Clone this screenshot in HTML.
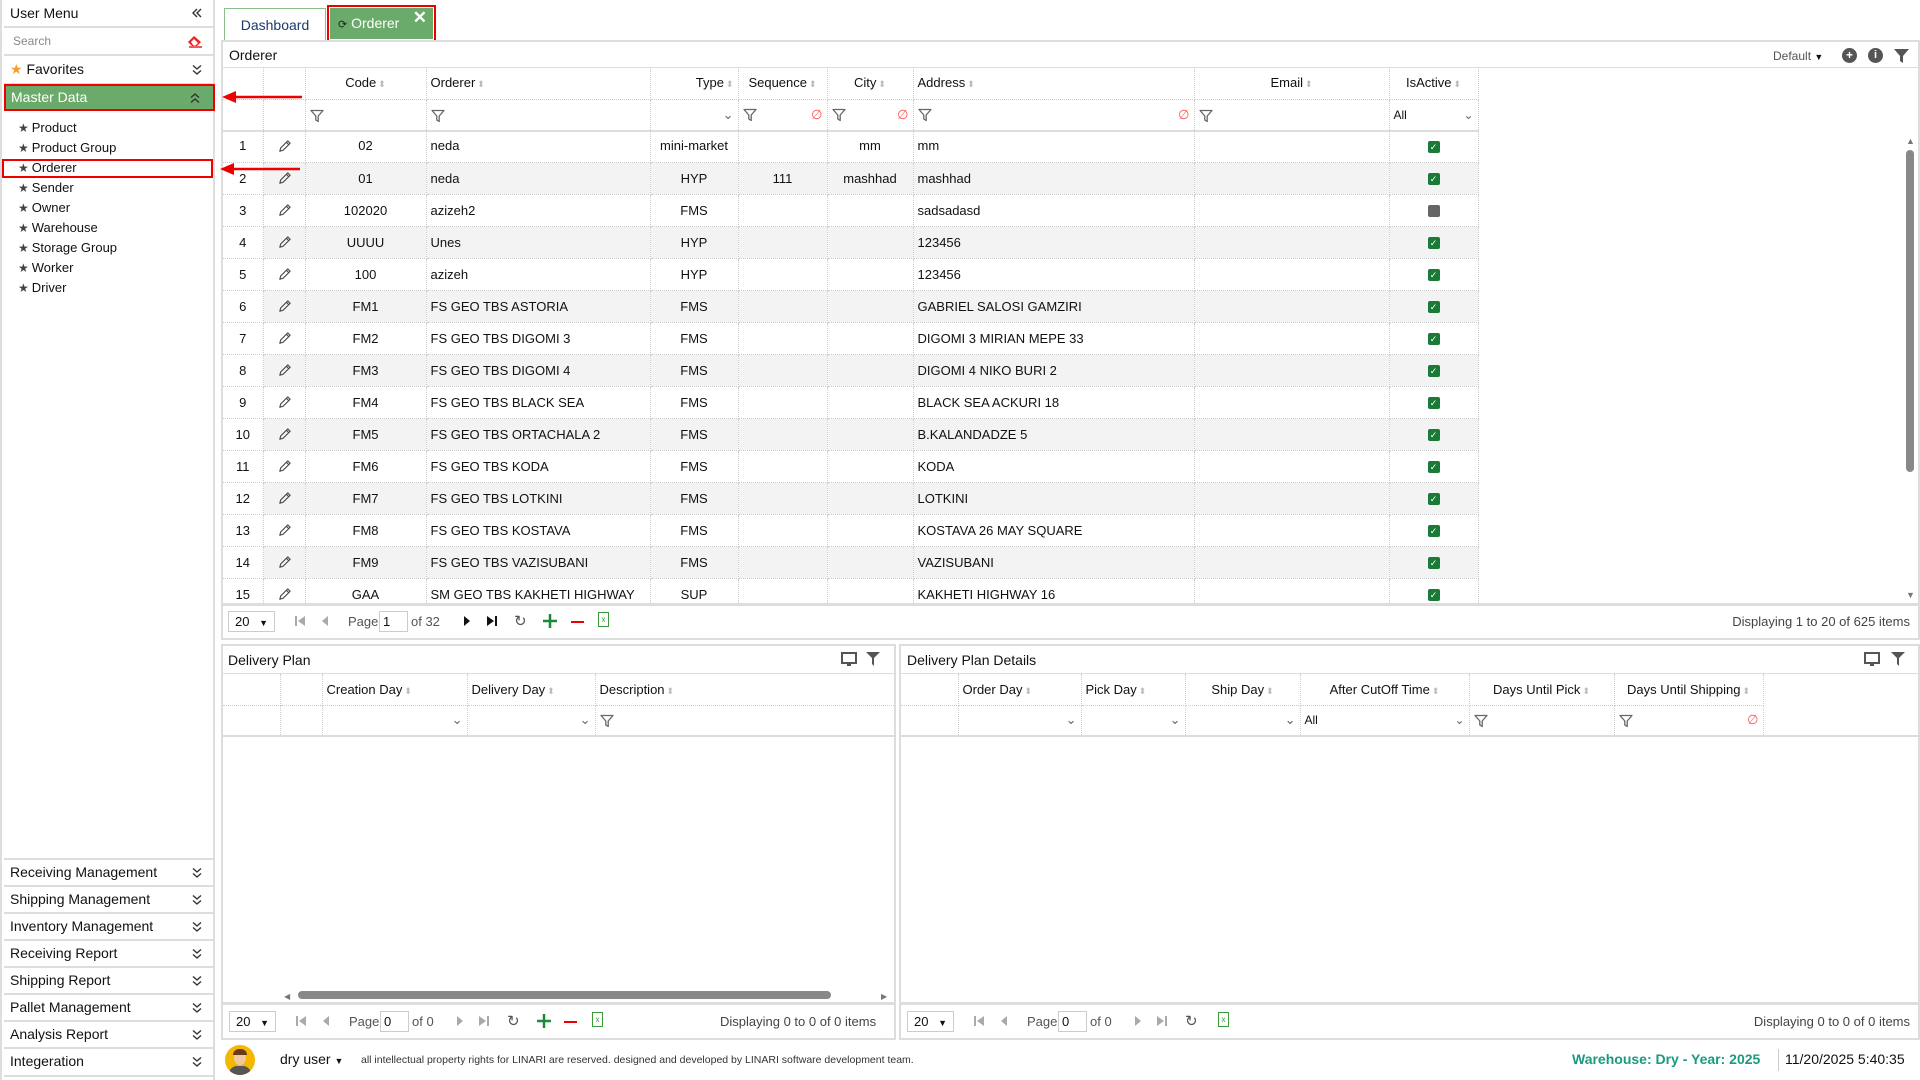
<!DOCTYPE html>
<html><head><meta charset="utf-8">
<style>
*{box-sizing:border-box;margin:0;padding:0}
body{width:1920px;height:1080px;overflow:hidden;background:#fff;font-family:"Liberation Sans",Arial,sans-serif;font-size:13px;color:#111;position:relative}
.a{position:absolute}
.side{left:0;top:0;width:215px;height:1080px;border-right:2px solid #ddd;border-left:2px solid #ddd}
.srow{position:absolute;left:2px;width:211px;border-bottom:2px solid #ddd;font-size:14px;padding-left:6px}
.chev{position:absolute;right:12px;top:50%;transform:translateY(-50%);width:12px;height:12px}
.item{position:absolute;left:16px;font-size:13px}
.item .st{color:#444;font-size:12px;margin-right:3px}
.panel{border:2px solid #ddd;background:#fff}
table{border-collapse:collapse;table-layout:fixed}
td,th{border-right:1px dotted #ccc;border-bottom:1px dotted #ccc;font-weight:normal;white-space:nowrap;overflow:hidden;padding:0 4px}
.grid td{height:32px}
.ev td{background:#f3f3f3}
.ev td.rn{background:#fff}
.c{text-align:center}
.hs{color:#bbb;font-size:9px;margin-left:2px}
.cb{display:inline-block;width:12px;height:12px;background:#1a7a36;border-radius:2px;color:#fff;font-size:9px;line-height:12px;text-align:center;vertical-align:middle}
.nul{color:#f55;float:right}
.pg{position:absolute;color:#555;font-size:13px}
.sel{border:1px solid #ccc;background:#fff}
.fi{display:inline-block;width:14px;height:14px;vertical-align:middle}
.pe{display:inline-block;width:15px;height:15px;vertical-align:middle}
.nc td:last-child{border-right:none}
</style></head><body>
<svg width="0" height="0" style="position:absolute">
<defs>
<symbol id="dd" viewBox="0 0 12 12"><path d="M2 1.5L6 5 10 1.5M2 6.5L6 10 10 6.5" fill="none" stroke="#333" stroke-width="1.4"/></symbol>
<symbol id="du" viewBox="0 0 12 12"><path d="M2 5.5L6 2 10 5.5M2 10.5L6 7 10 10.5" fill="none" stroke="#333" stroke-width="1.4"/></symbol>
<symbol id="flt" viewBox="0 0 14 14"><path d="M1 1.5H13L8.2 7V12.5L5.8 11V7Z" fill="none" stroke="#666" stroke-width="1.3" stroke-linejoin="round"/></symbol>
<symbol id="pen" viewBox="0 0 16 16"><path d="M3 13L4 9.5 11.5 2 14 4.5 6.5 12Z M10 3.5L12.5 6 M3 13L6.5 12" fill="none" stroke="#444" stroke-width="1.2" stroke-linejoin="round"/></symbol>
</defs></svg>

<!-- sidebar -->
<div class="a side">
 <div class="srow" style="top:0;height:28px;line-height:26px">User Menu<svg class="chev" viewBox="0 0 12 12"><path d="M6 2L2 6 6 10M10 2L6 6 10 10" fill="none" stroke="#333" stroke-width="1.4"/></svg></div>
 <div class="srow" style="top:28px;height:28px;line-height:26px;color:#888;font-size:12px;padding-left:9px">Search<svg class="chev" style="width:16px;height:14px" viewBox="0 0 16 14"><path d="M1 8L7 2 14 8 10 12H5Z" fill="#e22"/><path d="M4 8.5L7 11.5M2 13H15" stroke="#e22" stroke-width="1.4" fill="none"/><path d="M4 8L7 5 11 9 8.5 11.5H6.5Z" fill="#fff"/></svg></div>
 <div class="srow" style="top:56px;height:29px;line-height:27px"><span style="color:#f0a030">★</span> Favorites<svg class="chev"><use href="#dd"/></svg></div>
 <div class="a" style="left:2px;top:84px;width:211px;height:27px;background:#6aaa6a;border:2px solid #e00;color:#fff;font-size:14px;line-height:23px;padding-left:5px">Master Data<svg class="chev"><use href="#du"/></svg></div>
 <div class="item" style="top:120px"><span class="st">★</span>Product</div>
 <div class="item" style="top:140px"><span class="st">★</span>Product Group</div>
 <div class="item" style="top:160px"><span class="st">★</span>Orderer</div>
 <div class="a" style="left:0px;top:159px;width:211px;height:19px;border:2px solid #e00"></div>
 <div class="item" style="top:180px"><span class="st">★</span>Sender</div>
 <div class="item" style="top:200px"><span class="st">★</span>Owner</div>
 <div class="item" style="top:220px"><span class="st">★</span>Warehouse</div>
 <div class="item" style="top:240px"><span class="st">★</span>Storage Group</div>
 <div class="item" style="top:260px"><span class="st">★</span>Worker</div>
 <div class="item" style="top:280px"><span class="st">★</span>Driver</div>
 <div class="srow" style="top:858px;height:2px;padding:0"></div>
 <div class="srow" style="top:860px;height:27px;line-height:25px">Receiving Management<svg class="chev"><use href="#dd"/></svg></div>
 <div class="srow" style="top:887px;height:27px;line-height:25px">Shipping Management<svg class="chev"><use href="#dd"/></svg></div>
 <div class="srow" style="top:914px;height:27px;line-height:25px">Inventory Management<svg class="chev"><use href="#dd"/></svg></div>
 <div class="srow" style="top:941px;height:27px;line-height:25px">Receiving Report<svg class="chev"><use href="#dd"/></svg></div>
 <div class="srow" style="top:968px;height:27px;line-height:25px">Shipping Report<svg class="chev"><use href="#dd"/></svg></div>
 <div class="srow" style="top:995px;height:27px;line-height:25px">Pallet Management<svg class="chev"><use href="#dd"/></svg></div>
 <div class="srow" style="top:1022px;height:27px;line-height:25px">Analysis Report<svg class="chev"><use href="#dd"/></svg></div>
 <div class="srow" style="top:1049px;height:28px;line-height:25px">Integeration<svg class="chev"><use href="#dd"/></svg></div>
</div>

<!-- tabs -->
<div class="a" style="left:224px;top:8px;width:102px;height:34px;border:1px solid #8bbf8b;border-bottom:none;color:#1a3a6a;font-size:14px;text-align:center;line-height:32px">Dashboard</div>
<div class="a" style="left:327px;top:5px;width:109px;height:37px;border:2px solid #e00;padding:1px"><div style="background:#6aaa6a;height:31px;color:#fff;font-size:14px;line-height:31px;padding-left:8px"><span style="font-size:11px;color:#222">⟳</span> Orderer<span style="position:absolute;right:7px;top:0px;font-size:17px;font-weight:bold;line-height:22px">✕</span></div></div>

<!-- main panel -->
<div class="a panel" style="left:221px;top:40px;width:1699px;height:600px">
 <div class="a" style="left:6px;top:5px;font-size:14px">Orderer</div>
 <div class="a" style="left:1550px;top:7px;font-size:12px;color:#555">Default <span style="color:#111;font-size:9px">▼</span></div>
 <div class="a" style="left:1619px;top:6px;width:15px;height:15px;border-radius:50%;background:#555;color:#fff;font-size:12px;font-weight:bold;text-align:center;line-height:15px">+</div>
 <div class="a" style="left:1645px;top:6px;width:15px;height:15px;border-radius:50%;background:#555;color:#fff;font-size:11px;font-weight:bold;text-align:center;line-height:15px">i</div>
 <svg class="a" style="left:1671px;top:7px" width="15" height="14"><path d="M0 0H15L9 7V14L6 12V7Z" fill="#555"/></svg>
 <div class="a" style="left:0;top:25px;width:1695px;border-top:1px solid #ddd"></div>
</div>
<div class="a" style="left:223px;top:67px">
<table class="grid" style="width:1255px">
<colgroup><col style="width:40px"><col style="width:42px"><col style="width:121px"><col style="width:224px"><col style="width:88px"><col style="width:89px"><col style="width:86px"><col style="width:281px"><col style="width:195px"><col style="width:89px"></colgroup>
<tr style="height:32px"><th></th><th></th><th class="c">Code<span class="hs">⬍</span></th><th style="text-align:left">Orderer<span class="hs">⬍</span></th><th style="text-align:right">Type<span class="hs">⬍</span></th><th class="c">Sequence<span class="hs">⬍</span></th><th class="c">City<span class="hs">⬍</span></th><th style="text-align:left">Address<span class="hs">⬍</span></th><th class="c">Email<span class="hs">⬍</span></th><th class="c">IsActive<span class="hs">⬍</span></th></tr>
<tr style="height:31px"><td style="border-bottom:2px solid #ddd"></td><td style="border-bottom:2px solid #ddd"></td><td style="border-bottom:2px solid #ddd"><svg class="fi"><use href="#flt"/></svg></td><td style="border-bottom:2px solid #ddd"><svg class="fi"><use href="#flt"/></svg></td><td style="border-bottom:2px solid #ddd;text-align:right;color:#666">⌄</td><td style="border-bottom:2px solid #ddd"><svg class="fi"><use href="#flt"/></svg><span class="nul">∅</span></td><td style="border-bottom:2px solid #ddd"><svg class="fi"><use href="#flt"/></svg><span class="nul">∅</span></td><td style="border-bottom:2px solid #ddd"><svg class="fi"><use href="#flt"/></svg><span class="nul">∅</span></td><td style="border-bottom:2px solid #ddd"><svg class="fi"><use href="#flt"/></svg></td><td style="border-bottom:2px solid #ddd;font-size:12px">All<span style="float:right;color:#666">⌄</span></td></tr>
</table>
</div>
<div class="a" style="left:223px;top:130px;width:1680px;height:474px;overflow:hidden">
<table class="grid" style="width:1255px">
<colgroup><col style="width:40px"><col style="width:42px"><col style="width:121px"><col style="width:224px"><col style="width:88px"><col style="width:89px"><col style="width:86px"><col style="width:281px"><col style="width:195px"><col style="width:89px"></colgroup>
<tr><td class="c rn">1</td><td class="c"><svg class="pe"><use href="#pen"/></svg></td><td class="c">02</td><td>neda</td><td class="c">mini-market</td><td></td><td class="c">mm</td><td>mm</td><td></td><td class="c"><span class="cb">✓</span></td></tr>
<tr class="ev"><td class="c rn">2</td><td class="c"><svg class="pe"><use href="#pen"/></svg></td><td class="c">01</td><td>neda</td><td class="c">HYP</td><td class="c">111</td><td class="c">mashhad</td><td>mashhad</td><td></td><td class="c"><span class="cb">✓</span></td></tr>
<tr><td class="c rn">3</td><td class="c"><svg class="pe"><use href="#pen"/></svg></td><td class="c">102020</td><td>azizeh2</td><td class="c">FMS</td><td></td><td></td><td>sadsadasd</td><td></td><td class="c"><span class="cb" style="background:#666"></span></td></tr>
<tr class="ev"><td class="c rn">4</td><td class="c"><svg class="pe"><use href="#pen"/></svg></td><td class="c">UUUU</td><td>Unes</td><td class="c">HYP</td><td></td><td></td><td>123456</td><td></td><td class="c"><span class="cb">✓</span></td></tr>
<tr><td class="c rn">5</td><td class="c"><svg class="pe"><use href="#pen"/></svg></td><td class="c">100</td><td>azizeh</td><td class="c">HYP</td><td></td><td></td><td>123456</td><td></td><td class="c"><span class="cb">✓</span></td></tr>
<tr class="ev"><td class="c rn">6</td><td class="c"><svg class="pe"><use href="#pen"/></svg></td><td class="c">FM1</td><td>FS GEO TBS ASTORIA</td><td class="c">FMS</td><td></td><td></td><td>GABRIEL SALOSI GAMZIRI</td><td></td><td class="c"><span class="cb">✓</span></td></tr>
<tr><td class="c rn">7</td><td class="c"><svg class="pe"><use href="#pen"/></svg></td><td class="c">FM2</td><td>FS GEO TBS DIGOMI 3</td><td class="c">FMS</td><td></td><td></td><td>DIGOMI 3 MIRIAN MEPE 33</td><td></td><td class="c"><span class="cb">✓</span></td></tr>
<tr class="ev"><td class="c rn">8</td><td class="c"><svg class="pe"><use href="#pen"/></svg></td><td class="c">FM3</td><td>FS GEO TBS DIGOMI 4</td><td class="c">FMS</td><td></td><td></td><td>DIGOMI 4 NIKO BURI 2</td><td></td><td class="c"><span class="cb">✓</span></td></tr>
<tr><td class="c rn">9</td><td class="c"><svg class="pe"><use href="#pen"/></svg></td><td class="c">FM4</td><td>FS GEO TBS BLACK SEA</td><td class="c">FMS</td><td></td><td></td><td>BLACK SEA ACKURI 18</td><td></td><td class="c"><span class="cb">✓</span></td></tr>
<tr class="ev"><td class="c rn">10</td><td class="c"><svg class="pe"><use href="#pen"/></svg></td><td class="c">FM5</td><td>FS GEO TBS ORTACHALA 2</td><td class="c">FMS</td><td></td><td></td><td>B.KALANDADZE 5</td><td></td><td class="c"><span class="cb">✓</span></td></tr>
<tr><td class="c rn">11</td><td class="c"><svg class="pe"><use href="#pen"/></svg></td><td class="c">FM6</td><td>FS GEO TBS KODA</td><td class="c">FMS</td><td></td><td></td><td>KODA</td><td></td><td class="c"><span class="cb">✓</span></td></tr>
<tr class="ev"><td class="c rn">12</td><td class="c"><svg class="pe"><use href="#pen"/></svg></td><td class="c">FM7</td><td>FS GEO TBS LOTKINI</td><td class="c">FMS</td><td></td><td></td><td>LOTKINI</td><td></td><td class="c"><span class="cb">✓</span></td></tr>
<tr><td class="c rn">13</td><td class="c"><svg class="pe"><use href="#pen"/></svg></td><td class="c">FM8</td><td>FS GEO TBS KOSTAVA</td><td class="c">FMS</td><td></td><td></td><td>KOSTAVA 26 MAY SQUARE</td><td></td><td class="c"><span class="cb">✓</span></td></tr>
<tr class="ev"><td class="c rn">14</td><td class="c"><svg class="pe"><use href="#pen"/></svg></td><td class="c">FM9</td><td>FS GEO TBS VAZISUBANI</td><td class="c">FMS</td><td></td><td></td><td>VAZISUBANI</td><td></td><td class="c"><span class="cb">✓</span></td></tr>
<tr><td class="c rn">15</td><td class="c"><svg class="pe"><use href="#pen"/></svg></td><td class="c">GAA</td><td>SM GEO TBS KAKHETI HIGHWAY</td><td class="c">SUP</td><td></td><td></td><td>KAKHETI HIGHWAY 16</td><td></td><td class="c"><span class="cb">✓</span></td></tr>
</table>
</div>
<!-- vscroll -->
<div class="a" style="left:1906px;top:136px;font-size:9px;color:#777">▲</div>
<div class="a" style="left:1906px;top:150px;width:8px;height:322px;background:#888;border-radius:4px"></div>
<div class="a" style="left:1906px;top:590px;font-size:9px;color:#777">▼</div>
<!-- pager -->
<div class="a" style="left:221px;top:603px;width:1699px;border-top:3px solid #ddd"></div>
<div class="a sel" style="left:228px;top:611px;width:47px;height:21px;font-size:13px;line-height:19px;padding-left:6px">20 <span style="font-size:9px;margin-left:6px">▼</span></div>
<svg class="a" style="left:294px;top:615px" width="12" height="12"><path d="M2 1V11" stroke="#aaa" stroke-width="2"/><path d="M11 1V11L4 6Z" fill="#aaa"/></svg>
<svg class="a" style="left:320px;top:615px" width="10" height="12"><path d="M8 1V11L2 6Z" fill="#aaa"/></svg>
<div class="pg" style="left:348px;top:614px">Page</div>
<div class="a sel" style="left:379px;top:611px;width:29px;height:21px;font-size:13px;line-height:19px;padding-left:3px">1</div>
<div class="pg" style="left:411px;top:614px">of 32</div>
<svg class="a" style="left:462px;top:615px" width="10" height="12"><path d="M2 1V11L8 6Z" fill="#111"/></svg>
<svg class="a" style="left:486px;top:615px" width="12" height="12"><path d="M1 1V11L8 6Z" fill="#111"/><path d="M10 1V11" stroke="#111" stroke-width="2"/></svg>
<div class="pg" style="left:514px;top:612px;font-size:15px">↻</div>
<svg class="a" style="left:543px;top:614px" width="14" height="14"><path d="M7 0V14M0 7H14" stroke="#1a8a3a" stroke-width="2.5"/></svg>
<div class="a" style="left:571px;top:621px;width:13px;height:2px;background:#e00"></div>
<div class="pg" style="left:598px;top:612px;color:#3a9a3a;border:1px solid #3a9a3a;width:11px;height:15px;font-size:8px;text-align:center;line-height:14px">x</div>
<div class="pg" style="right:10px;top:614px;color:#444">Displaying 1 to 20 of 625 items</div>

<!-- red arrows -->
<svg class="a" style="left:220px;top:88px" width="85" height="90"><path d="M82 9H14" stroke="#e00" stroke-width="2.5"/><path d="M2 9L16 3V15Z" fill="#e00"/><path d="M80 81H12" stroke="#e00" stroke-width="2.5"/><path d="M0 81L14 75V87Z" fill="#e00"/></svg>

<!-- Delivery Plan -->
<div class="a panel" style="left:221px;top:644px;width:675px;height:396px"></div>
<div class="a" style="left:228px;top:652px;font-size:14px">Delivery Plan</div>
<svg class="a" style="left:841px;top:652px" width="16" height="15"><rect x="1" y="1" width="14" height="10" fill="none" stroke="#555" stroke-width="2"/><rect x="6" y="11" width="4" height="3" fill="#555"/></svg>
<svg class="a" style="left:866px;top:652px" width="14" height="14"><path d="M0 0H14L8 6V14L6 12V6Z" fill="#555"/></svg>
<div class="a" style="left:223px;top:673px;width:671px;border-top:1px solid #ddd"></div>
<div class="a" style="left:223px;top:674px">
<table style="width:671px" class="nc"><colgroup><col style="width:57px"><col style="width:42px"><col style="width:145px"><col style="width:128px"><col style="width:299px"></colgroup>
<tr style="height:31px"><td></td><td></td><td>Creation Day<span class="hs">⬍</span></td><td>Delivery Day<span class="hs">⬍</span></td><td>Description<span class="hs">⬍</span></td></tr>
<tr style="height:31px"><td style="border-bottom:2px solid #ddd"></td><td style="border-bottom:2px solid #ddd"></td><td style="border-bottom:2px solid #ddd;text-align:right;color:#666">⌄</td><td style="border-bottom:2px solid #ddd;text-align:right;color:#666">⌄</td><td style="border-bottom:2px solid #ddd"><svg class="fi"><use href="#flt"/></svg></td></tr></table></div>
<div class="a" style="left:284px;top:992px;font-size:8px;color:#777">◀</div>
<div class="a" style="left:298px;top:991px;width:533px;height:8px;background:#888;border-radius:4px"></div>
<div class="a" style="left:881px;top:992px;font-size:8px;color:#777">▶</div>
<div class="a" style="left:221px;top:1002px;width:675px;border-top:3px solid #ddd"></div>
<div class="a sel" style="left:229px;top:1011px;width:47px;height:21px;line-height:19px;padding-left:6px">20 <span style="font-size:9px;margin-left:6px">▼</span></div>
<svg class="a" style="left:295px;top:1015px" width="12" height="12"><path d="M2 1V11" stroke="#aaa" stroke-width="2"/><path d="M11 1V11L4 6Z" fill="#aaa"/></svg>
<svg class="a" style="left:321px;top:1015px" width="10" height="12"><path d="M8 1V11L2 6Z" fill="#aaa"/></svg>
<div class="pg" style="left:349px;top:1014px">Page</div>
<div class="a sel" style="left:380px;top:1011px;width:29px;height:21px;line-height:19px;padding-left:3px">0</div>
<div class="pg" style="left:412px;top:1014px">of 0</div>
<svg class="a" style="left:455px;top:1015px" width="10" height="12"><path d="M2 1V11L8 6Z" fill="#aaa"/></svg>
<svg class="a" style="left:478px;top:1015px" width="12" height="12"><path d="M1 1V11L8 6Z" fill="#aaa"/><path d="M10 1V11" stroke="#aaa" stroke-width="2"/></svg>
<div class="pg" style="left:507px;top:1012px;font-size:15px">↻</div>
<svg class="a" style="left:537px;top:1014px" width="14" height="14"><path d="M7 0V14M0 7H14" stroke="#1a8a3a" stroke-width="2.5"/></svg>
<div class="a" style="left:564px;top:1021px;width:13px;height:2px;background:#e00"></div>
<div class="pg" style="left:592px;top:1012px;color:#3a9a3a;border:1px solid #3a9a3a;width:11px;height:15px;font-size:8px;text-align:center;line-height:14px">x</div>
<div class="pg" style="left:720px;top:1014px;color:#444">Displaying 0 to 0 of 0 items</div>

<!-- Delivery Plan Details -->
<div class="a panel" style="left:899px;top:644px;width:1021px;height:396px"></div>
<div class="a" style="left:907px;top:652px;font-size:14px">Delivery Plan Details</div>
<svg class="a" style="left:1864px;top:652px" width="16" height="15"><rect x="1" y="1" width="14" height="10" fill="none" stroke="#555" stroke-width="2"/><rect x="6" y="11" width="4" height="3" fill="#555"/></svg>
<svg class="a" style="left:1891px;top:652px" width="14" height="14"><path d="M0 0H14L8 6V14L6 12V6Z" fill="#555"/></svg>
<div class="a" style="left:901px;top:673px;width:1017px;border-top:1px solid #ddd"></div>
<div class="a" style="left:901px;top:674px">
<table style="width:1017px" class="nc"><colgroup><col style="width:57px"><col style="width:123px"><col style="width:104px"><col style="width:115px"><col style="width:169px"><col style="width:145px"><col style="width:149px"><col style="width:155px"></colgroup>
<tr style="height:31px"><td></td><td>Order Day<span class="hs">⬍</span></td><td>Pick Day<span class="hs">⬍</span></td><td class="c">Ship Day<span class="hs">⬍</span></td><td class="c">After CutOff Time<span class="hs">⬍</span></td><td class="c">Days Until Pick<span class="hs">⬍</span></td><td class="c">Days Until Shipping<span class="hs">⬍</span></td><td style="border-bottom:none"></td></tr>
<tr style="height:31px"><td style="border-bottom:2px solid #ddd"></td><td style="border-bottom:2px solid #ddd;text-align:right;color:#666">⌄</td><td style="border-bottom:2px solid #ddd;text-align:right;color:#666">⌄</td><td style="border-bottom:2px solid #ddd;text-align:right;color:#666">⌄</td><td style="border-bottom:2px solid #ddd;font-size:12px">All<span style="float:right;color:#666">⌄</span></td><td style="border-bottom:2px solid #ddd"><svg class="fi"><use href="#flt"/></svg></td><td style="border-bottom:2px solid #ddd"><svg class="fi"><use href="#flt"/></svg><span class="nul">∅</span></td><td style="border-bottom:2px solid #ddd"></td></tr></table></div>
<div class="a" style="left:899px;top:1002px;width:1021px;border-top:3px solid #ddd"></div>
<div class="a sel" style="left:907px;top:1011px;width:47px;height:21px;line-height:19px;padding-left:6px">20 <span style="font-size:9px;margin-left:6px">▼</span></div>
<svg class="a" style="left:973px;top:1015px" width="12" height="12"><path d="M2 1V11" stroke="#aaa" stroke-width="2"/><path d="M11 1V11L4 6Z" fill="#aaa"/></svg>
<svg class="a" style="left:999px;top:1015px" width="10" height="12"><path d="M8 1V11L2 6Z" fill="#aaa"/></svg>
<div class="pg" style="left:1027px;top:1014px">Page</div>
<div class="a sel" style="left:1058px;top:1011px;width:29px;height:21px;line-height:19px;padding-left:3px">0</div>
<div class="pg" style="left:1090px;top:1014px">of 0</div>
<svg class="a" style="left:1133px;top:1015px" width="10" height="12"><path d="M2 1V11L8 6Z" fill="#aaa"/></svg>
<svg class="a" style="left:1156px;top:1015px" width="12" height="12"><path d="M1 1V11L8 6Z" fill="#aaa"/><path d="M10 1V11" stroke="#aaa" stroke-width="2"/></svg>
<div class="pg" style="left:1185px;top:1012px;font-size:15px">↻</div>
<div class="pg" style="left:1218px;top:1012px;color:#3a9a3a;border:1px solid #3a9a3a;width:11px;height:15px;font-size:8px;text-align:center;line-height:14px">x</div>
<div class="pg" style="right:10px;top:1014px;color:#444">Displaying 0 to 0 of 0 items</div>

<!-- footer -->
<div class="a" style="left:225px;top:1045px;width:30px;height:30px;border-radius:50%;background:#f5b800;overflow:hidden"><div style="position:absolute;left:9px;top:6px;width:12px;height:14px;border-radius:50%;background:#f0c9a0"></div><div style="position:absolute;left:8px;top:4px;width:14px;height:6px;border-radius:6px 6px 0 0;background:#6a3a1a"></div><div style="position:absolute;left:4px;top:21px;width:22px;height:12px;border-radius:8px 8px 0 0;background:#555"></div></div>
<div class="a" style="left:280px;top:1051px;font-size:14px">dry user <span style="font-size:9px">▼</span></div>
<div class="a" style="left:361px;top:1054px;font-size:10.5px;color:#333">all intellectual property rights for LINARI are reserved. designed and developed by LINARI software development team.</div>
<div class="a" style="left:1572px;top:1051px;font-size:14px;font-weight:bold;color:#1a9a80">Warehouse: Dry - Year: 2025</div>
<div class="a" style="left:1778px;top:1049px;height:22px;border-left:1px solid #ccc"></div>
<div class="a" style="left:1785px;top:1051px;font-size:14px">11/20/2025 5:40:35</div>
</body></html>
